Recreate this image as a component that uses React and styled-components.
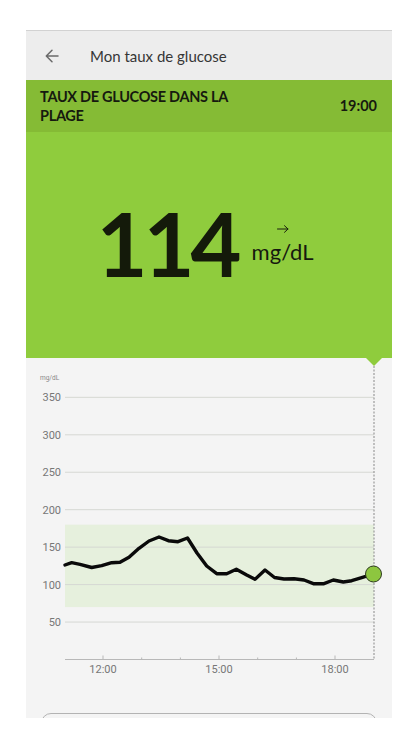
import styled, { createGlobalStyle } from 'styled-components'

const GlobalStyle = createGlobalStyle`
    body {
        margin: 0;
        background: #ffffff;
        font-family: Lato, "Noto Sans", sans-serif;
    }
`

const readings = [
    [39, 207], [45.7, 204.7], [54, 206.3], [65.7, 209.5], [75.7, 207.7], [85.7, 204.7],
    [94, 204.3], [103, 199.3], [113, 190.3], [123, 183], [133, 179], [142.3, 182.7],
    [152, 183.7], [161.5, 180], [171, 195], [180.7, 208], [190.7, 215.7], [200.7, 215.7],
    [210.3, 211.2], [220.7, 217], [229, 221.3], [239, 212], [248.5, 219.5], [258, 221],
    [268, 220.7], [278, 222], [288, 225.8], [297.3, 225.8], [307.3, 222], [317.3, 224],
    [325.7, 222.7], [335.7, 219.7], [347.5, 216],
]

const yLevels = [350, 300, 250, 200, 150, 100, 50]
const hours = [
    { x: 77, label: '12:00' },
    { x: 115.7 },
    { x: 154.4 },
    { x: 193, label: '15:00' },
    { x: 231.7 },
    { x: 270.4 },
    { x: 309, label: '18:00' },
]

const yOf = (v) => 301.5 - v * 0.749

function GlucoseChart() {
    const line = readings.map(([x, y]) => `${x},${y}`).join(' ')
    return (
        <ChartSvg width="366" height="330" viewBox="0 0 366 330">
            <polygon points="340,0 356,0 348,8" fill="#8fcc3d" />
            <text x="14" y="22" className="unit">mg/dL</text>
            <rect x="39" y={yOf(180)} width="309" height={yOf(70) - yOf(180)} fill="#e6f0dd" />
            {yLevels.map((v) => (
                <g key={v}>
                    <line x1="39" x2="348" y1={yOf(v)} y2={yOf(v)} stroke="#d6d8d3" strokeWidth="1" />
                    <text x="35" y={yOf(v) + 4} className="tick" textAnchor="end">{v}</text>
                </g>
            ))}
            <line x1="39" x2="348" y1="301.5" y2="301.5" stroke="#b8b8b8" strokeWidth="1" />
            {hours.map((h) => (
                <g key={h.x}>
                    <line x1={h.x} x2={h.x} y1={h.label ? 297.5 : 299.5} y2="301.5" stroke="#b8b8b8" strokeWidth="1" />
                    {h.label && <text x={h.x} y="314.5" className="tick" textAnchor="middle">{h.label}</text>}
                </g>
            ))}
            <line x1="348" x2="348" y1="8" y2="301.5" stroke="#9a9a9a" strokeWidth="1.2" strokeDasharray="2 1.5" />
            <polyline points={line} fill="none" stroke="#0a0a0a" strokeWidth="3.4" strokeLinejoin="round" strokeLinecap="round" />
            <circle cx="347.5" cy="216" r="8" fill="#8dc63f" stroke="#2e3a20" strokeWidth="1" />
        </ChartSvg>
    )
}

function App() {
    return (
        <Page>
            <GlobalStyle />
            <Phone>
                <TopBar>
                    <BackButton aria-label="Retour">
                        <svg width="14" height="14" viewBox="0 0 14 14" fill="none" stroke="#6a6a6a" strokeWidth="1.5" strokeLinecap="round" strokeLinejoin="round">
                            <path d="M13 7H1.5M7 1.3L1.3 7L7 12.7" />
                        </svg>
                    </BackButton>
                    <Title>Mon taux de glucose</Title>
                </TopBar>
                <RangeBar>
                    <RangeLabel>TAUX DE GLUCOSE DANS LA PLAGE</RangeLabel>
                    <RangeTime>19:00</RangeTime>
                </RangeBar>
                <Hero>
                    <Reading>114</Reading>
                    <UnitBox>
                        <svg width="12" height="8" viewBox="0 0 12 8" fill="none" stroke="#1a1f0f" strokeWidth="1" strokeLinecap="round">
                            <path d="M0.5 4H11M7.5 0.7L11 4L7.5 7.3" />
                        </svg>
                        <Unit>mg/dL</Unit>
                    </UnitBox>
                </Hero>
                <GlucoseChart />
                <BottomCard />
            </Phone>
        </Page>
    )
}

const Page = styled.div`
    padding: 30px 22px 0 26px;
`

const Phone = styled.div`
    width: 366px;
    height: 687px;
    overflow: hidden;
    background: #f4f4f4;
    border-top: 1px solid #d2d2d2;
    display: flex;
    flex-direction: column;
`

const TopBar = styled.div`
    height: 49px;
    flex-shrink: 0;
    background: #ededed;
    display: flex;
    align-items: center;
    padding-left: 18px;
    gap: 30px;
`

const BackButton = styled.button`
    border: none;
    background: none;
    padding: 0;
    width: 16px;
    height: 16px;
    display: flex;
    align-items: center;
    justify-content: center;
`

const Title = styled.span`
    font-size: 15px;
    color: #363636;
`

const RangeBar = styled.div`
    height: 52px;
    flex-shrink: 0;
    background: #85bb35;
    display: flex;
    align-items: center;
    justify-content: space-between;
    padding: 0 15px 0 14px;
    color: #16190f;
    font-weight: 700;
    font-size: 14.5px;
`

const RangeLabel = styled.div`
    max-width: 200px;
    line-height: 19.5px;
    letter-spacing: -0.3px;
`

const RangeTime = styled.div`
    line-height: 19.5px;
`

const Hero = styled.div`
    height: 226px;
    flex-shrink: 0;
    box-sizing: border-box;
    background: #8fcc3d;
    display: flex;
    justify-content: center;
    align-items: flex-start;
    padding: 67px 8px 0 0;
`

const Reading = styled.div`
    font-size: 88px;
    line-height: 88px;
    font-weight: 700;
    letter-spacing: -4px;
    color: #141a0a;
`

const UnitBox = styled.div`
    display: flex;
    flex-direction: column;
    align-items: center;
    gap: 7px;
    margin: 26px 0 0 14px;
`

const Unit = styled.div`
    font-size: 22px;
    line-height: 24px;
    color: #16190f;
`

const ChartSvg = styled.svg`
    display: block;
    flex-shrink: 0;

    text {
        font-family: Roboto, "Liberation Sans", sans-serif;
    }

    .tick {
        font-size: 11px;
        fill: #777777;
    }

    .unit {
        font-size: 6.5px;
        fill: #888888;
    }
`

const BottomCard = styled.div`
    margin: 25px 15px 0 15px;
    height: 60px;
    flex-shrink: 0;
    border: 1px solid #b3b3b3;
    border-radius: 10px;
`

export default App
